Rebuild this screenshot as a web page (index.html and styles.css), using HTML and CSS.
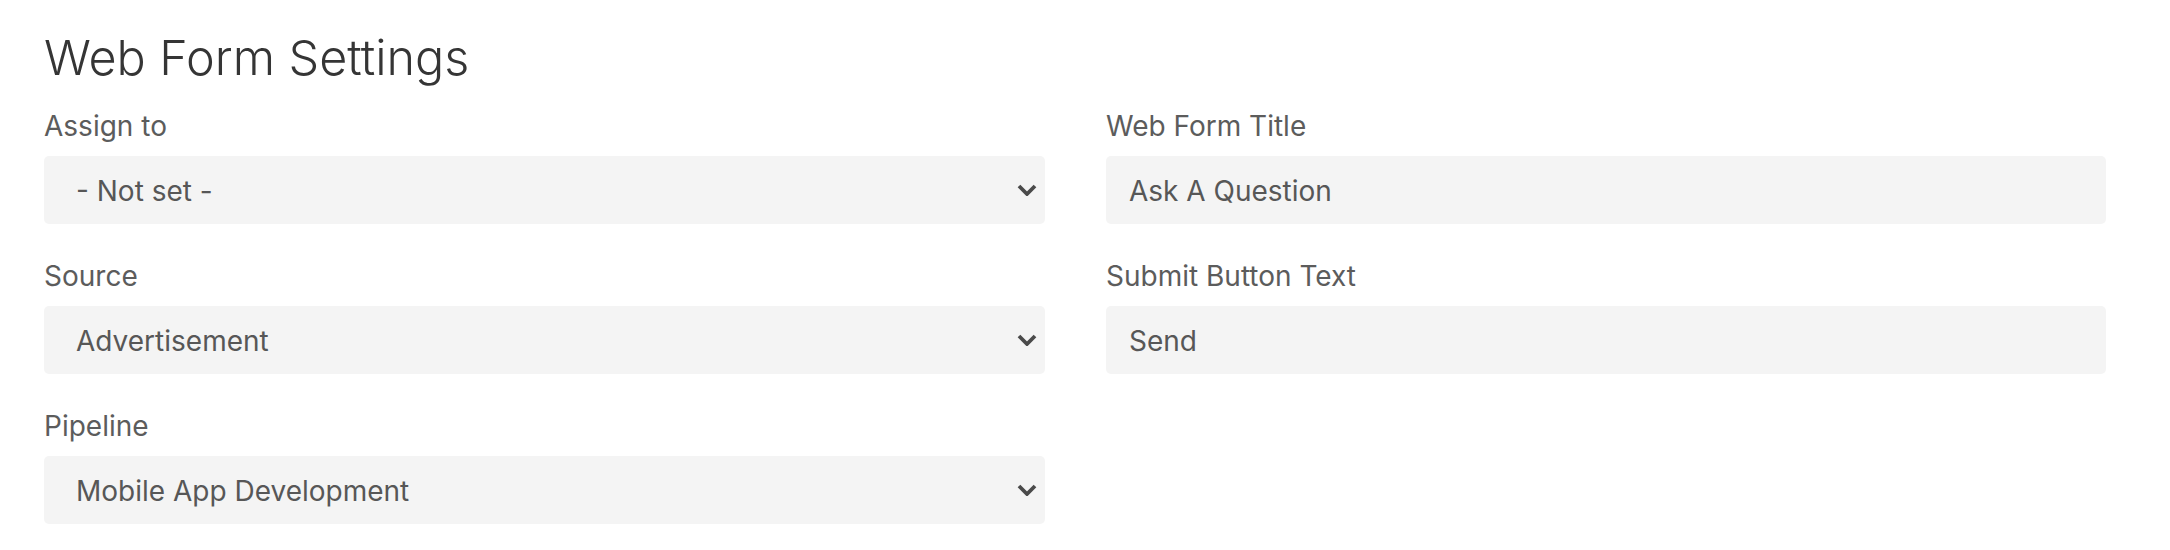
FILE: index.html
```html
<!DOCTYPE html>
<html lang="en">
<head>
<meta charset="utf-8">
<title>Web Form Settings</title>
<link rel="stylesheet" href="styles.css">
</head>
<body>
<main class="page">
  <h1 class="page-title">Web Form Settings</h1>
  <div class="form-grid">
    <div class="form-col">
      <div class="field">
        <label class="field-label" for="assign">Assign to</label>
        <div class="select-wrap">
          <select id="assign" class="control control-select">
            <option>- Not set -</option>
          </select>
          <svg class="chevron" viewBox="0 0 20 12" aria-hidden="true"><polyline points="2,2 10,10 18,2" /></svg>
        </div>
      </div>
      <div class="field">
        <label class="field-label" for="source">Source</label>
        <div class="select-wrap">
          <select id="source" class="control control-select">
            <option>Advertisement</option>
          </select>
          <svg class="chevron" viewBox="0 0 20 12" aria-hidden="true"><polyline points="2,2 10,10 18,2" /></svg>
        </div>
      </div>
      <div class="field">
        <label class="field-label" for="pipeline">Pipeline</label>
        <div class="select-wrap">
          <select id="pipeline" class="control control-select">
            <option>Mobile App Development</option>
          </select>
          <svg class="chevron" viewBox="0 0 20 12" aria-hidden="true"><polyline points="2,2 10,10 18,2" /></svg>
        </div>
      </div>
    </div>
    <div class="form-col">
      <div class="field">
        <label class="field-label" for="title">Web Form Title</label>
        <input id="title" class="control control-input" type="text" value="Ask A Question">
      </div>
      <div class="field">
        <label class="field-label" for="submit">Submit Button Text</label>
        <input id="submit" class="control control-input" type="text" value="Send">
      </div>
    </div>
  </div>
</main>
</body>
</html>
```

FILE: styles.css
```css
* {
  box-sizing: border-box;
}

html, body {
  margin: 0;
  padding: 0;
  background: #ffffff;
}

body {
  font-family: "Inter", "Noto Sans", "Liberation Sans", sans-serif;
  color: #5a5a5a;
}

.page {
  padding: 29px 0 0 44px;
}

.page-title {
  margin: 0 0 19px 0;
  font-size: 48.5px;
  line-height: 58px;
  font-weight: 300;
  color: #353535;
}

.form-grid {
  display: grid;
  grid-template-columns: 1001px 1000px;
  column-gap: 61px;
  align-items: start;
}

.form-col {
  display: flex;
  flex-direction: column;
  gap: 32px;
}

.field {
  display: flex;
  flex-direction: column;
  gap: 9px;
}

.field-label {
  font-size: 28px;
  line-height: 41px;
  font-weight: 400;
  color: #5c5c5c;
}

.select-wrap {
  position: relative;
}

.control {
  display: block;
  width: 100%;
  height: 68px;
  margin: 0;
  border: none;
  border-radius: 5px;
  background: #f4f4f4;
  font-family: inherit;
  font-size: 28px;
  font-weight: 400;
  color: #575757;
  outline: none;
}

.control-select {
  -webkit-appearance: none;
  appearance: none;
  padding: 2px 50px 0 32px;
}

.control-input {
  padding: 2px 22px 0 23px;
}

.chevron {
  position: absolute;
  right: 8px;
  top: 28px;
  width: 20px;
  height: 12px;
  fill: none;
  stroke: #4a4a4a;
  stroke-width: 3.8;
  stroke-linejoin: miter;
  stroke-linecap: butt;
  pointer-events: none;
}
```
